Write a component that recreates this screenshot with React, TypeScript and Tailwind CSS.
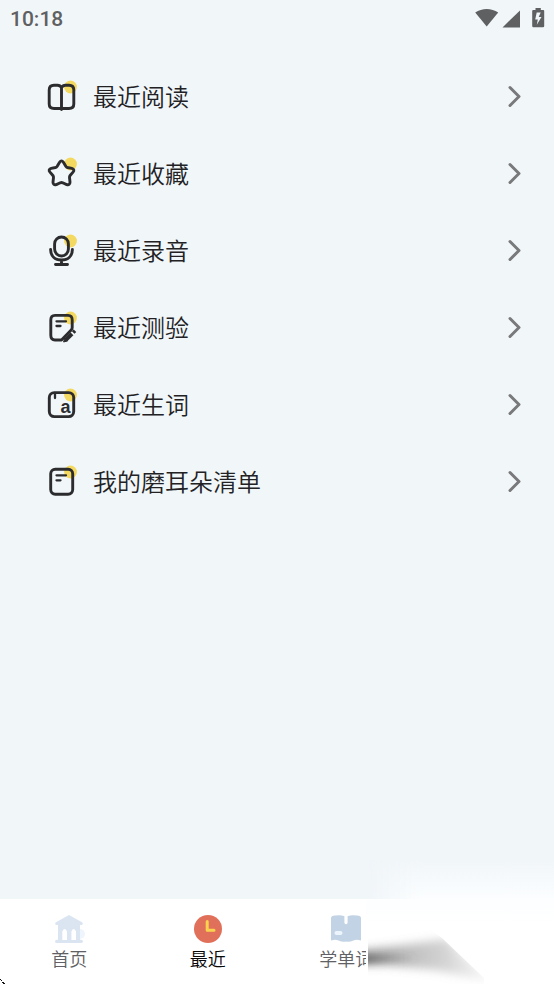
import type { ReactNode } from "react";

function RowIcon({ children }: { children: ReactNode }) {
  return (
    <svg
      viewBox="0 0 40 40"
      className="h-10 w-10 shrink-0"
      fill="none"
      stroke="#2c2c2e"
      strokeWidth="2.9"
      strokeLinecap="round"
      strokeLinejoin="round"
      aria-hidden="true"
    >
      <circle cx="30.5" cy="11" r="6.4" fill="#f3d95f" stroke="none" />
      {children}
    </svg>
  );
}

const rows: { label: string; icon: ReactNode }[] = [
  {
    label: "最近阅读",
    icon: (
      <RowIcon>
        <path d="M21.5 11.5C20.5 9.7 19.5 9.2 17.5 9.2H14C10.8 9.2 9.2 11 9.2 14V28C9.2 31.2 11 32.5 14 32.5H29C32 32.5 33.8 31 33.8 28V14C33.8 11 32 9.2 29 9.2H25.5C23.5 9.2 22.5 9.7 21.5 11.5V33.5" />
      </RowIcon>
    ),
  },
  {
    label: "最近收藏",
    icon: (
      <RowIcon>
        <path d="M19.6 9.3Q21.5 6.5 23.4 9.3L25.8 13.3Q26.4 14.2 27.5 14.5L31.8 15.4Q35.2 16.4 33 19.1L30.1 22.5Q29.4 23.4 29.5 24.5L30 29.2Q29.9 32.5 26.7 31.6L22.7 29.8Q21.5 29.3 20.3 29.8L16.3 31.6Q13.1 32.5 13 29.2L13.5 24.5Q13.6 23.4 12.9 22.5L10 19.1Q7.8 16.4 11.2 15.4L15.5 14.5Q16.6 14.2 17.2 13.3Z" />
      </RowIcon>
    ),
  },
  {
    label: "最近录音",
    icon: (
      <RowIcon>
        <rect x="14.6" y="7" width="13.8" height="19" rx="6.9" />
        <path d="M10.6 19.5C10.6 26 15 30 21.5 30C28 30 32.4 26 32.4 19.5M21.5 30V34M15.5 34.5H27.5" />
      </RowIcon>
    ),
  },
  {
    label: "最近测验",
    icon: (
      <RowIcon>
        <path d="M21.5 33H15C12 33 10.8 31.3 10.8 28.3V13C10.8 10 12.5 8.4 15 8.4H28C31 8.4 32.2 10 32.2 13V20.5Q32.2 22 31.2 23Z" />
        <path d="M16.5 14.3H26M16.5 19H20.5" strokeWidth="2.3" />
        <path d="M25.6 33.2L32 26.8" strokeWidth="4" strokeLinecap="butt" />
        <path d="M33.2 25.6L35 23.8" strokeWidth="3.6" strokeLinecap="butt" />
        <path d="M24.6 31.4L23.6 35L27.2 34Z" fill="#2c2c2e" strokeWidth="1" />
      </RowIcon>
    ),
  },
  {
    label: "最近生词",
    icon: (
      <RowIcon>
        <rect x="9.3" y="8.6" width="24.4" height="24" rx="5" />
        <path d="M15 9.5V14" strokeWidth="2.3" />
        <text
          x="20.5"
          y="29"
          fill="#2c2c2e"
          stroke="none"
          className="font-['Liberation_Sans',sans-serif] text-[18px] font-bold"
        >
          a
        </text>
      </RowIcon>
    ),
  },
  {
    label: "我的磨耳朵清单",
    icon: (
      <RowIcon>
        <rect x="10.7" y="8.2" width="22" height="25" rx="4.6" />
        <path d="M16.5 14.3H26M16.5 19.3H20.5" strokeWidth="2.3" />
      </RowIcon>
    ),
  },
];

function StatusBar() {
  return (
    <header className="flex h-[38px] items-center justify-between pr-2 pl-2.5 text-[#5f6062]">
      <span className="font-[Roboto,sans-serif] text-[21px] leading-9 font-medium">10:18</span>
      <svg viewBox="0 0 72 24" className="h-6 w-[72px]" fill="currentColor" aria-hidden="true">
        <path d="M1.2 5.6C8 .8 17.4 .8 24.2 5.6L12.7 19.6Z" />
        <path d="M46 3.4V20.4H28.5Z" />
        <path
          fillRule="evenodd"
          d="M61.5 1H66.8V3H69.2Q70.2 3 70.2 4V19Q70.2 20.2 69 20.2H59.4Q58.2 20.2 58.2 19V4Q58.2 3 59.2 3H61.5ZM62.7 5.5L61.2 12.4H63.8L62.8 17.8L67.5 9.9H64.7L66.7 5.5Z"
        />
      </svg>
    </header>
  );
}

function HomeIcon() {
  return (
    <svg viewBox="0 0 32 30" className="h-[30px] w-8" fill="#dbe5f1" aria-hidden="true">
      <circle cx="27" cy="20" r="5" fill="#eff5fc" />
      <path d="M16 1L29.5 8.6Q30.4 11 28.4 11H27V25.8H28Q30 25.8 30 27.5Q30 29 28 29H4Q2 29 2 27.5Q2 25.8 4 25.8H5V11H3.6Q1.6 11 2.5 8.6Z" />
      <path d="M9.3 26V17.4Q11.7 12.6 14 17.4V26ZM18.4 26V17.4Q20.7 12.6 23 17.4V26Z" fill="#fff" />
    </svg>
  );
}

function ClockIcon() {
  return (
    <svg viewBox="0 0 32 30" className="h-[30px] w-8" aria-hidden="true">
      <circle cx="16" cy="15" r="14" fill="#e1705a" />
      <path d="M15.2 7.5V16.2H22" fill="none" stroke="#f9d34e" strokeWidth="3" strokeLinecap="round" strokeLinejoin="round" />
    </svg>
  );
}

function WordsIcon() {
  return (
    <svg viewBox="0 0 32 30" className="h-[30px] w-8" aria-hidden="true">
      <path
        d="M1 4Q1 1.8 5 1.6Q11 .8 14.4 2.2V9Q16 11.5 17.6 9V2.2Q21 .8 27 1.6Q31 1.8 31 4V26.5Q26.5 25.2 23.5 26.5Q19.5 28.2 16 27.5Q12.5 28.2 8.5 26.5Q5.5 25.2 1 26.5Z"
        fill="#c3d3e6"
      />
      <rect x="4.5" y="17" width="8" height="4" rx="2" fill="#edf5fc" />
    </svg>
  );
}

const tabs = [
  { label: "首页", icon: <HomeIcon />, active: false },
  { label: "最近", icon: <ClockIcon />, active: true },
  { label: "学单词", icon: <WordsIcon />, active: false },
];

function CornerSmear() {
  return (
    <div className="pointer-events-none absolute right-0 bottom-0 flex h-[124px] w-[34%] flex-col">
      <div className="h-10 bg-linear-to-b from-[#f1f6f9] to-[#fcfeff] [mask-image:linear-gradient(to_right,transparent,black_30%)]" />
      <div className="flex-1 bg-linear-to-b from-[#fcfeff] to-white to-30%">
        <svg viewBox="0 0 188 84" className="h-[84px] w-[188px]" aria-hidden="true">
          <defs>
            <linearGradient id="fade" gradientUnits="userSpaceOnUse" x1="0" x2="118" y1="0" y2="0">
              <stop offset="0" stopColor="#555" stopOpacity="0.6" />
              <stop offset="0.3" stopColor="#777" stopOpacity="0.5" />
              <stop offset="0.65" stopColor="#888" stopOpacity="0.38" />
              <stop offset="1" stopColor="#aaa" stopOpacity="0.15" />
            </linearGradient>
            <linearGradient id="tip" gradientUnits="userSpaceOnUse" x1="0" x2="50" y1="0" y2="0">
              <stop offset="0" stopColor="#444" stopOpacity="0.5" />
              <stop offset="1" stopColor="#666" stopOpacity="0" />
            </linearGradient>
            <filter id="soft" x="-20%" y="-60%" width="140%" height="220%">
              <feGaussianBlur stdDeviation="5" />
            </filter>
            <filter id="core" x="-20%" y="-200%" width="140%" height="500%">
              <feGaussianBlur stdDeviation="3" />
            </filter>
            <clipPath id="edge">
              <path d="M2 30H65L76 38L118 78V84H2Z" />
            </clipPath>
          </defs>
          <g clipPath="url(#edge)">
            <path d="M-20 52L30 46L80 39L125 82L70 70L20 65L-20 64Z" fill="url(#fade)" filter="url(#soft)" />
            <path d="M-20 55L50 55L50 62L-20 64Z" fill="url(#tip)" filter="url(#core)" />
          </g>
        </svg>
      </div>
    </div>
  );
}

export default function App() {
  return (
    <div className="relative flex min-h-screen flex-col overflow-hidden bg-[#f1f6f9] font-['Noto_Sans_CJK_SC',sans-serif] font-[350]">
      <StatusBar />
      <main className="flex-1 pt-[19px]">
        <ul>
          {rows.map((row) => (
            <li key={row.label}>
              <button type="button" className="flex h-[77px] w-full items-center pr-7 pl-10 text-left">
                {row.icon}
                <span className="ml-[13px] flex-1 text-2xl text-[#222224]">{row.label}</span>
                <svg
                  viewBox="0 0 24 24"
                  className="h-6 w-6"
                  fill="none"
                  stroke="#79797b"
                  strokeWidth="3"
                  strokeLinecap="round"
                  strokeLinejoin="round"
                  aria-hidden="true"
                >
                  <path d="M8 3.5L17 12.5L8 21.5" />
                </svg>
              </button>
            </li>
          ))}
        </ul>
      </main>
      <nav className="flex h-[85px] bg-white">
        {tabs.map((tab) => (
          <button
            key={tab.label}
            type="button"
            aria-current={tab.active ? "page" : undefined}
            className="flex flex-1 flex-col items-center pt-[15px]"
          >
            {tab.icon}
            <span className={tab.active ? "text-lg text-[#080808]" : "text-lg text-[#606164]"}>{tab.label}</span>
          </button>
        ))}
        <div className="flex-1" />
      </nav>
      <CornerSmear />
      <svg viewBox="0 0 5 5" className="absolute bottom-0 left-0 h-[5px] w-[5px]" aria-hidden="true">
        <path d="M0 0H1V1H2V2H1V1H0ZM2 3H4V4H5V5H3V4H2Z" fill="#111" />
      </svg>
    </div>
  );
}
